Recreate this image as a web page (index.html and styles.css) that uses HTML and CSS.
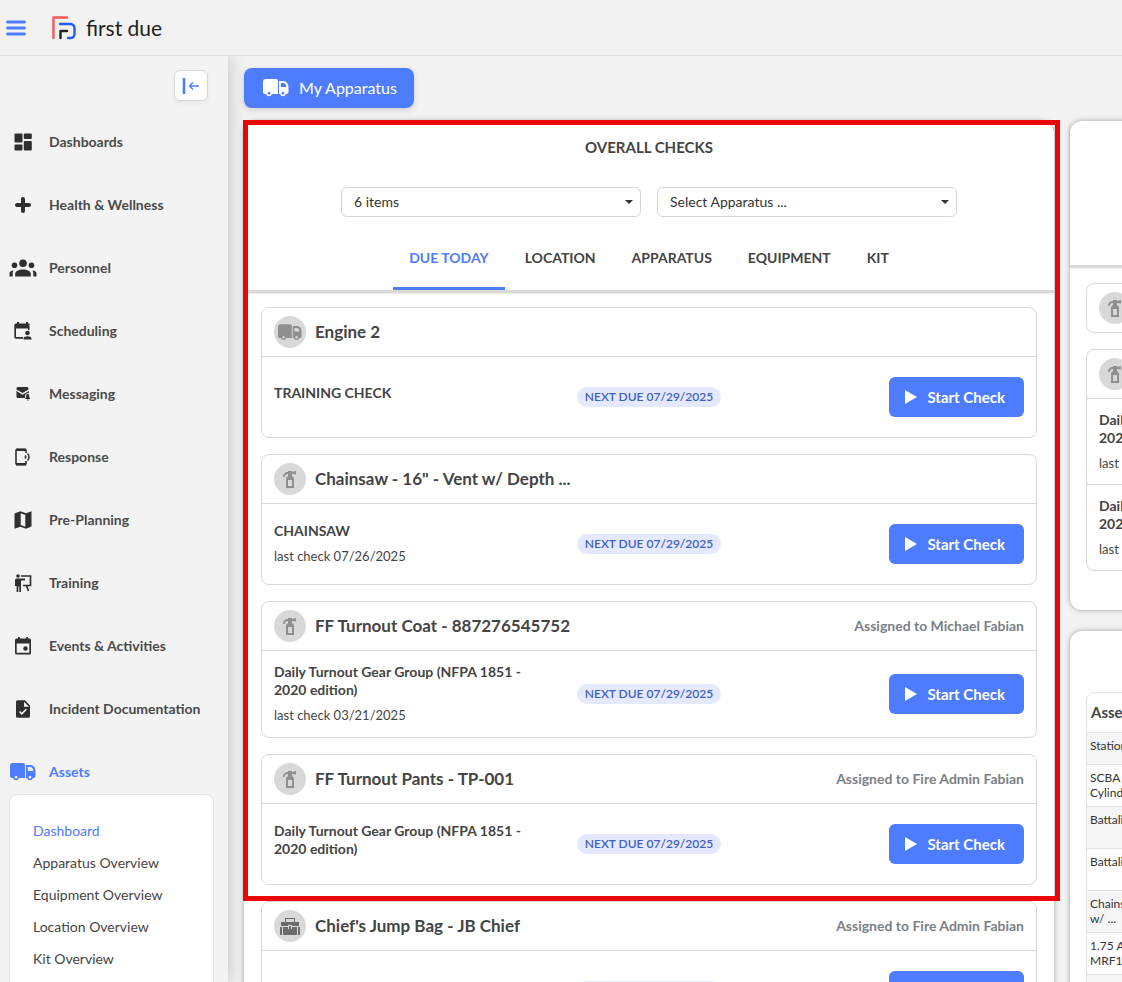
FILE: index.html
```html
<!DOCTYPE html>
<html lang="en">
<head>
  <meta charset="UTF-8">
  <meta name="viewport" content="width=device-width, initial-scale=1.0">
  <title>First Due – Assets Dashboard</title>
  <link rel="stylesheet" href="styles.css">
</head>

<body>
  <!-- ===== SHARED ICONS ===== -->
  <svg class="sprite" aria-hidden="true">
    <symbol id="truck" viewBox="0 0 26 18">
      <path fill-rule="evenodd" d="M2.500 0H13a2 2 0 0 1 2 2v13H8.900a3 3 0 0 1-5.800 0H2a2 2 0 0 1-2-2V2.500A2.500 2.500 0 0 1 2.500 0zM6 12.800a1.400 1.400 0 1 0 .01 0z"/>
      <path fill-rule="evenodd" d="M16 2h4.500c2.500 0 5 2.500 5 6V13a2 2 0 0 1-2 2h-.6a3 3 0 0 1-5.800 0H16zM17.800 4v4h5.400c0-2.500-1.200-4-3.200-4zM20 12.800a1.400 1.400 0 1 0 .01 0z"/>
    </symbol>
    <symbol id="extinguisher" viewBox="0 0 14 17">
      <path fill-rule="evenodd" d="M5 0h4v1l4-1v3.500L9 3v2l2 2v10H3V7l2-2V3C3 3 2 4 1.500 6H0C0 3 2 1 5 1zM5 9v6h4V9z"/>
    </symbol>
    <symbol id="toolbox" viewBox="0 0 20 17">
      <path fill-rule="evenodd" d="M5 0h10v4h4v4h-7V7H8v1H1V4h4zM6 1v3h8V1zM0 9h2v8H0zM3 9h5v2h1V8h2v3h1V9h5v8H3zM18 9h2v8h-2z"/>
    </symbol>
  </svg>

  <!-- ===== TOP BAR ===== -->
  <header class="topbar">
    <button class="menu-button" aria-label="Menu">
      <svg width="20" height="16" viewBox="0 0 20 16"><path d="M1.500 2h17M1.500 8h17M1.500 14h17" stroke="#4d7cfe" stroke-width="2.800" stroke-linecap="round"/></svg>
    </button>
    <a href="#" class="logo">
      <svg width="24" height="24" viewBox="0 0 24 24" fill="none" stroke-width="2.400" stroke-linecap="round" stroke-linejoin="round">
        <path d="M1.500 22V1.500H15" stroke="#f4565b"/>
        <path d="M8 8h10.500a4 4 0 0 1 4 4v6a4 4 0 0 1-4 4H16" stroke="#1f5bff"/>
        <path d="M8.500 22v-7H15" stroke="#222"/>
      </svg>
      <span>first due</span>
    </a>
  </header>

  <div class="layout">
    <!-- ===== SIDEBAR ===== -->
    <nav class="sidebar">
      <button class="collapse" aria-label="Collapse menu">
        <svg width="18" height="18" viewBox="0 0 18 18" fill="none" stroke="#4d7cfe"><path d="M2 1v16" stroke-width="2.600"/><path d="M17 9H8M11 5.500L7.500 9l3.500 3.500" stroke-width="1.300"/></svg>
      </button>
      <ul class="nav-list">
        <li><a href="#" class="nav-item"><span class="nav-icon"><svg width="18" height="18" viewBox="0 0 18 18"><rect x="0.500" y="0.500" width="8" height="9" rx="1"/><rect x="9.800" y="0.500" width="8" height="5.500" rx="1"/><rect x="0.500" y="11.500" width="8" height="6" rx="1"/><rect x="9.800" y="8" width="8" height="9.500" rx="1"/></svg></span>Dashboards</a></li>
        <li><a href="#" class="nav-item"><span class="nav-icon"><svg width="18" height="18" viewBox="0 0 18 18"><path d="M9 3v12M3 9h12" stroke="#2f2f2f" stroke-width="4" stroke-linecap="round"/></svg></span>Health &amp; Wellness</a></li>
        <li><a href="#" class="nav-item"><span class="nav-icon"><svg width="28" height="18" viewBox="0 0 28 18"><circle cx="14" cy="4.200" r="3.800"/><circle cx="5.500" cy="6.200" r="2.800"/><circle cx="22.500" cy="6.200" r="2.800"/><path d="M6.200 17.500v-3c0-2 3.500-4 7.800-4s7.800 2 7.800 4v3zM.5 17.500v-3c0-1.500 1.500-2.700 4-2.900-.6.900-.8 2-.8 3v2.900zM27.500 17.500v-3c0-1.500-1.500-2.700-4-2.900.6.900.8 2 .8 3v2.900z"/></svg></span>Personnel</a></li>
        <li><a href="#" class="nav-item"><span class="nav-icon"><svg width="18" height="18" viewBox="0 0 18 18"><path fill-rule="evenodd" d="M3 0h2v1.500h7V0h2v1.500h1.500V8H14V6.500H2V15h7v1.700H2A1.700 1.700 0 0 1 .3 15V3A1.700 1.700 0 0 1 2 1.500h1z"/><circle cx="13.500" cy="11" r="2.300"/><path d="M9.500 17.500v-1c0-1.400 2-2.300 4-2.300s4 .9 4 2.300v1z"/></svg></span>Scheduling</a></li>
        <li><a href="#" class="nav-item"><span class="nav-icon"><svg width="14" height="14" viewBox="0 0 14 14"><path d="M2 0h9a1.500 1.500 0 0 1 1.500 1.500v1L6.500 6 .5 2.500v-1A1.500 1.500 0 0 1 2 0z"/><path d="M.5 4l6 3.700L12.800 4v2.200A3 3 0 0 0 9 9v2H2A1.500 1.500 0 0 1 .5 9.500z"/><path d="M9.200 11.300l1-1V8.500c0-1 .6-1.600 1.500-1.600s1.500.6 1.500 1.600v1.800l1 1v.7h-5zM11 12.500h1.500v.9H11z"/></svg></span>Messaging</a></li>
        <li><a href="#" class="nav-item"><span class="nav-icon"><svg width="18" height="18" viewBox="0 0 18 18" fill="none"><path d="M12 5V2.500a1 1 0 0 0-1-1H3a1 1 0 0 0-1 1v13a1 1 0 0 0 1 1h8a1 1 0 0 0 1-1V13" stroke="#2f2f2f" stroke-width="1.600"/><path d="M2 1.800h10M2 16.200h10" stroke="#2f2f2f" stroke-width="2.400"/><path d="M11 7.500c.8.800.8 2.200 0 3M13.500 5.500c2 2 2 5 0 7" stroke="#2f2f2f" stroke-width="1.500"/></svg></span>Response</a></li>
        <li><a href="#" class="nav-item"><span class="nav-icon"><svg width="18" height="18" viewBox="0 0 18 18"><path fill-rule="evenodd" d="M.5 2.500L6.300.3l5.700 2 5.500-2v15.200L12 17.700l-5.700-2-5.800 2zM6.700 2.300v11.800l4.600 1.600V3.900z"/></svg></span>Pre-Planning</a></li>
        <li><a href="#" class="nav-item"><span class="nav-icon"><svg width="18" height="18" viewBox="0 0 18 18"><circle cx="4" cy="2" r="1.800"/><path d="M2.500 4.500H11v2H7V18H5.300v-5.500h-1V18H2.600v-6H1V6a1.500 1.500 0 0 1 1.500-1.500z"/><path d="M7 2h9.500v9.500H9M12.500 11.500l2 5.500" fill="none" stroke="#2f2f2f" stroke-width="1.700"/></svg></span>Training</a></li>
        <li><a href="#" class="nav-item"><span class="nav-icon"><svg width="18" height="18" viewBox="0 0 18 18"><path fill-rule="evenodd" d="M4 0h1.800v1.500h6.400V0H14v1.500h1.500A1.500 1.500 0 0 1 17 3v13a1.500 1.500 0 0 1-1.500 1.500h-13A1.500 1.500 0 0 1 1 16V3a1.500 1.500 0 0 1 1.500-1.500H4zM2.700 6.500v9.300h12.600V6.500z"/><circle cx="11.500" cy="11.500" r="2.200"/></svg></span>Events &amp; Activities</a></li>
        <li><a href="#" class="nav-item"><span class="nav-icon"><svg width="18" height="18" viewBox="0 0 18 18"><path fill-rule="evenodd" d="M3.500.3H11L16 5.500v10.700a1.500 1.500 0 0 1-1.500 1.500h-11A1.500 1.500 0 0 1 2 16.200V1.800A1.500 1.500 0 0 1 3.500.3zM10 1.800v5h5z"/><path d="M5.500 11.500l2.300 2.300 4.500-4.500" fill="none" stroke="#f3f3f3" stroke-width="1.600"/></svg></span>Incident Documentation</a></li>
        <li>
          <a href="#" class="nav-item active"><span class="nav-icon"><svg width="26" height="18"><use href="#truck"/></svg></span>Assets</a>
          <ul class="submenu">
            <li><a href="#" class="active">Dashboard</a></li>
            <li><a href="#">Apparatus Overview</a></li>
            <li><a href="#">Equipment Overview</a></li>
            <li><a href="#">Location Overview</a></li>
            <li><a href="#">Kit Overview</a></li>
          </ul>
        </li>
      </ul>
    </nav>

    <main class="content">
      <button class="my-apparatus"><svg width="26" height="18"><use href="#truck"/></svg>My Apparatus</button>

      <div class="columns">
        <!-- ===== OVERALL CHECKS ===== -->
        <section class="panel checks">
          <div class="highlight">
            <div class="panel-head">
              <h2>OVERALL CHECKS</h2>
              <div class="filters">
                <select aria-label="Items"><option>6 items</option></select>
                <select aria-label="Apparatus"><option>Select Apparatus ...</option></select>
              </div>
              <div class="tabs" role="tablist">
                <button class="tab active" role="tab" aria-selected="true">DUE TODAY</button>
                <button class="tab" role="tab">LOCATION</button>
                <button class="tab" role="tab">APPARATUS</button>
                <button class="tab" role="tab">EQUIPMENT</button>
                <button class="tab" role="tab">KIT</button>
              </div>
            </div>

            <div class="card-list">
              <article class="card">
                <header><span class="badge"><svg width="24" height="17"><use href="#truck"/></svg></span><h3>Engine 2</h3></header>
                <div class="card-row">
                  <div class="check"><strong>TRAINING CHECK</strong></div>
                  <span class="due">NEXT DUE 07/29/2025</span>
                  <button class="start"><svg width="12" height="14" viewBox="0 0 12 14"><path d="M0 0l12 7-12 7z"/></svg>Start Check</button>
                </div>
              </article>

              <article class="card">
                <header><span class="badge"><svg width="14" height="17"><use href="#extinguisher"/></svg></span><h3>Chainsaw - 16" - Vent w/ Depth ...</h3></header>
                <div class="card-row">
                  <div class="check"><strong>CHAINSAW</strong><span>last check 07/26/2025</span></div>
                  <span class="due">NEXT DUE 07/29/2025</span>
                  <button class="start"><svg width="12" height="14" viewBox="0 0 12 14"><path d="M0 0l12 7-12 7z"/></svg>Start Check</button>
                </div>
              </article>

              <article class="card">
                <header><span class="badge"><svg width="14" height="17"><use href="#extinguisher"/></svg></span><h3>FF Turnout Coat - 887276545752</h3><p>Assigned to Michael Fabian</p></header>
                <div class="card-row">
                  <div class="check"><strong>Daily Turnout Gear Group (NFPA 1851 - 2020 edition)</strong><span>last check 03/21/2025</span></div>
                  <span class="due">NEXT DUE 07/29/2025</span>
                  <button class="start"><svg width="12" height="14" viewBox="0 0 12 14"><path d="M0 0l12 7-12 7z"/></svg>Start Check</button>
                </div>
              </article>

              <article class="card">
                <header><span class="badge"><svg width="14" height="17"><use href="#extinguisher"/></svg></span><h3>FF Turnout Pants - TP-001</h3><p>Assigned to Fire Admin Fabian</p></header>
                <div class="card-row">
                  <div class="check"><strong>Daily Turnout Gear Group (NFPA 1851 - 2020 edition)</strong></div>
                  <span class="due">NEXT DUE 07/29/2025</span>
                  <button class="start"><svg width="12" height="14" viewBox="0 0 12 14"><path d="M0 0l12 7-12 7z"/></svg>Start Check</button>
                </div>
              </article>
            </div>
          </div>

          <div class="card-list more">
            <article class="card">
              <header><span class="badge dark"><svg width="20" height="17"><use href="#toolbox"/></svg></span><h3>Chief's Jump Bag - JB Chief</h3><p>Assigned to Fire Admin Fabian</p></header>
              <div class="card-row">
                <div class="check"></div>
                <span class="due">NEXT DUE 07/29/2025</span>
                <button class="start"><svg width="12" height="14" viewBox="0 0 12 14"><path d="M0 0l12 7-12 7z"/></svg>Start Check</button>
              </div>
            </article>
          </div>
        </section>

        <!-- ===== RIGHT COLUMN (runs past the window edge) ===== -->
        <div class="side">
          <section class="panel side-checks">
            <div class="side-head"></div>
            <div class="card-list">
              <article class="card">
                <header><span class="badge"><svg width="14" height="17"><use href="#extinguisher"/></svg></span></header>
              </article>
              <article class="card">
                <header><span class="badge"><svg width="14" height="17"><use href="#extinguisher"/></svg></span></header>
                <div class="card-row">
                  <div class="check"><strong>Daily Turnout Gear Group (NFPA 1851 - 2020 edition)</strong><span>last check</span></div>
                </div>
                <div class="card-row">
                  <div class="check"><strong>Daily Turnout Gear Group (NFPA 1851 - 2020 edition)</strong><span>last check</span></div>
                </div>
              </article>
            </div>
          </section>

          <section class="panel side-assets">
            <div class="table-wrap">
              <table>
                <thead><tr><th>Asset</th></tr></thead>
                <tbody>
                  <tr class="short"><td>Station</td></tr>
                  <tr><td>SCBA<br>Cylinder</td></tr>
                  <tr><td>Battalion</td></tr>
                  <tr><td>Battalion</td></tr>
                  <tr><td>Chainsaw<br>w/ ...</td></tr>
                  <tr><td>1.75 A<br>MRF1</td></tr>
                  <tr><td></td></tr>
                </tbody>
              </table>
            </div>
          </section>
        </div>
      </div>
    </main>
  </div>
</body>
</html>
```
FILE: styles.css
```css
* { box-sizing: border-box; }

html, body {
  margin: 0; padding: 0;
  height: 100%;
  overflow: hidden;
  background: #f2f2f2;
  font-family: Lato, "Liberation Sans", sans-serif;
  font-size: 14px;
  line-height: 18px;
  color: #444;
}
body { display: flex; flex-direction: column; }

h2, h3, p, ul { margin: 0; padding: 0; }
ul { list-style: none; }
a { color: inherit; text-decoration: none; }
button { border: none; background: none; font: inherit; color: inherit; cursor: pointer; }
svg { display: block; flex: none; }
.sprite { position: absolute; width: 0; height: 0; }

/* ---------------- Top bar ---------------- */
.topbar {
  flex: none;
  display: flex; align-items: center; gap: 26px;
  height: 56px;
  padding: 0 6px;
  background: #f2f2f2;
  border-bottom: 1px solid #dedede;
}
.menu-button { padding: 0; }
.logo { display: flex; align-items: center; gap: 10px; font-size: 21px; line-height: 28px; color: #222; }

.layout { flex: 1; display: flex; min-height: 0; }

/* ---------------- Sidebar ---------------- */
.sidebar {
  flex: none;
  width: 228px;
  padding-top: 14px;
  overflow: hidden;
  background: #f3f3f3;
  box-shadow: 2px 0 16px rgba(0,0,0,0.18);
  clip-path: inset(0 -24px 0 0);
}
.collapse {
  display: flex; align-items: center; justify-content: center;
  width: 34px; height: 31px;
  margin: 0 20px 19px auto;
  padding: 0;
  background: #fff;
  border: 1px solid #d8d8d8;
  border-radius: 6px;
  box-shadow: 0 2px 4px rgba(0,0,0,0.06);
}
.nav-list { display: flex; flex-direction: column; gap: 19px; }
.nav-item { display: flex; align-items: center; gap: 12px; height: 44px; padding-left: 9px; font-weight: 700; color: #4a4a4a; }
.nav-icon { display: flex; justify-content: center; width: 28px; fill: #2f2f2f; }
.active, .nav-item.active { color: #4d7cfe; }
.active .nav-icon { fill: #4d7cfe; }
.submenu {
  margin: 0 14px 0 9px;
  padding: 20px 23px;
  background: #fff;
  border: 1px solid #e6e6e6;
  border-radius: 8px;
}
.submenu a { display: block; line-height: 32px; }

/* ---------------- Content ---------------- */
.content { flex: 1; min-width: 0; padding: 12px 0 0 16px; overflow: hidden; }
.my-apparatus {
  display: flex; align-items: center; gap: 10px;
  height: 40px;
  margin-bottom: 13px;
  padding: 0 17px 0 19px;
  background: #4d7cfe;
  border-radius: 8px;
  box-shadow: 0 2px 6px rgba(0,0,0,0.15);
  font-size: 16px;
  color: #fff; fill: #fff;
}
.columns { display: grid; grid-template-columns: calc(100% - 68px) 50%; gap: 16px; align-items: start; }
.panel { background: #fff; border-radius: 12px; box-shadow: 0 0 5px rgba(0,0,0,0.35); }

/* red frame round the checks that are due */
.highlight { position: relative; }
.highlight::after {
  content: "";
  position: absolute; inset: -1px -6px -16px -1px;
  border: 5px solid #ea0606;
  pointer-events: none;
}

.panel-head { display: flex; flex-direction: column; align-items: center; padding-top: 16px; border-bottom: 3px solid #d9d9d9; box-shadow: 0 1px 2px rgba(0,0,0,0.1); }
.panel-head h2 { font-size: 15px; line-height: 20px; font-weight: 700; }
.filters { display: flex; gap: 16px; margin-top: 30px; }
.filters select {
  appearance: none;
  width: 300px; height: 30px;
  padding: 0 12px;
  border: 1px solid #d5d5d5;
  border-radius: 6px;
  background: #fff url("data:image/svg+xml,%3Csvg xmlns='http://www.w3.org/2000/svg' width='8' height='4'%3E%3Cpath d='M0 0h8L4 4z' fill='%23333'/%3E%3C/svg%3E") no-repeat right 7px center;
  font: inherit; color: #333;
}
.tabs { display: flex; gap: 4px; margin-top: 8px; }
.tab { height: 65px; padding: 3px 16px 0; border-bottom: 3px solid transparent; font-weight: 700; }
.tab.active { border-color: #4d7cfe; }

/* ---------------- Cards ---------------- */
.card-list { display: flex; flex-direction: column; gap: 16px; padding: 14px 17px 0; }
.card-list.more { padding: 16px 17px; }
.card { border: 1px solid #d8d8d8; border-radius: 8px; background: #fff; }
.card header { display: flex; align-items: center; gap: 9px; height: 48px; padding: 0 12px; }
.card h3 { font-size: 17px; font-weight: 700; }
.card header p { margin-left: auto; font-weight: 700; color: #7b8087; }
.badge { flex: none; display: flex; align-items: center; justify-content: center; width: 32px; height: 32px; border-radius: 50%; background: #d8d8d8; fill: #8f8f8f; }
.badge.dark { fill: #6b6b6b; }
.card-row {
  display: grid; grid-template-columns: 1fr auto 1fr; align-items: center;
  min-height: 81px;
  padding: 12px 12px 13px;
  border-top: 1px solid #d8d8d8;
}
.check { max-width: 256px; }
.check strong { display: block; margin-bottom: 7px; font-weight: 700; }
.check span { display: block; font-size: 13px; }
.due { padding: 0 8px; border-radius: 10px; background: #e4e9ff; font-size: 12px; line-height: 20px; font-weight: 600; color: #3f5fc4; }
.start {
  justify-self: end;
  display: flex; align-items: center; gap: 10px;
  height: 40px;
  padding: 0 19px 0 16px;
  background: #4d7cfe;
  border-radius: 6px;
  font-size: 15px; font-weight: 700;
  color: #fff; fill: #fff;
}

/* ---------------- Right column ---------------- */
.side { display: flex; flex-direction: column; gap: 21px; }
.side-checks { padding-bottom: 39px; }
.side-head { height: 147px; border-bottom: 3px solid #d9d9d9; box-shadow: 0 1px 2px rgba(0,0,0,0.1); }
.side .card-list { padding: 15px 16px 0; }
.side .card-row { display: block; padding: 12px; }
.side-assets { padding: 61px 16px; }
.table-wrap { overflow: hidden; border: 1px solid #e2e2e2; border-radius: 8px 8px 0 0; }
table { width: 100%; border-collapse: collapse; font-size: 12px; line-height: 15px; color: #333; }
th { height: 39px; padding: 0 4px; text-align: left; font-size: 15px; color: #444; }
td { height: 42px; padding: 5px 3px; vertical-align: top; border-top: 1px solid #e2e2e2; }
.short td { height: 32px; }
tbody tr:nth-child(odd) { background: #f5f5f5; }
```
